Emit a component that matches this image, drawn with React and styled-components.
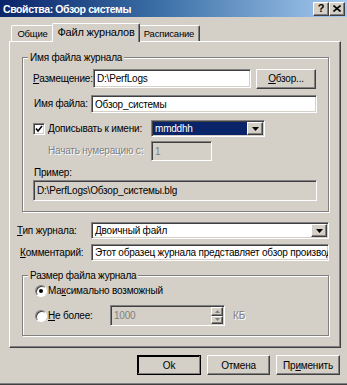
import React from 'react';
import styled, { createGlobalStyle, css } from 'styled-components';

const face = '#d4d0c8';
const shadow = '#808080';
const dark = '#404040';

const GlobalStyle = createGlobalStyle`
  html, body { margin: 0; padding: 0; background: ${face}; }
  * { box-sizing: border-box; }
  body {
    font-family: "Liberation Sans", Arial, sans-serif;
    font-size: 10px;
    letter-spacing: -0.2px;
    color: #000;
  }
`;

const sunken = css`
  border: 1px solid;
  border-color: ${shadow} #fff #fff ${shadow};
  box-shadow: inset 1px 1px 0 ${dark}, inset -1px -1px 0 ${face};
`;

const raised = css`
  border: 1px solid;
  border-color: #fff ${dark} ${dark} #fff;
  box-shadow: inset -1px -1px 0 ${shadow};
  background: ${face};
`;

const Window = styled.div`
  width: 347px;
  height: 385px;
  background: ${face};
  display: flex;
  flex-direction: column;
  overflow: hidden;
  border-bottom: 1px solid ${dark};
  box-shadow: inset 0 -1px 0 ${shadow};
`;

const TitleBar = styled.div`
  height: 17px;
  flex-shrink: 0;
  background: linear-gradient(to right, #0a246a 0%, #3a6ea5 45%, #a6caf0 100%);
  display: flex;
  align-items: center;
  justify-content: space-between;
  padding: 0 2px 0 3px;
`;

const Title = styled.span`
  color: #fff;
  font-weight: bold;
  font-size: 10.5px;
  letter-spacing: -0.4px;
`;

const CaptionButtons = styled.div`
  display: flex;
`;

const CaptionButton = styled.div`
  ${raised};
  width: 16px;
  height: 14px;
  display: flex;
  align-items: center;
  justify-content: center;
  font-weight: bold;
  font-size: 11px;
  line-height: 1;
`;

const Body = styled.div`
  flex: 1;
  display: flex;
  flex-direction: column;
  padding: 6px 6px 0 9px;
`;

const TabRow = styled.div`
  height: 18px;
  display: flex;
  align-items: flex-end;
  padding-left: 2px;
  position: relative;
  z-index: 1;
`;

const Tab = styled.div`
  width: ${p => p.$w}px;
  height: ${p => (p.$active ? 19 : 16)}px;
  margin: 0 ${p => (p.$active ? -2 : 0)}px ${p => (p.$active ? -1 : 0)}px;
  background: ${face};
  border-top: 1px solid #fff;
  border-left: 1px solid #fff;
  border-right: 1px solid ${dark};
  border-radius: 2px 2px 0 0;
  box-shadow: inset -1px 0 0 ${shadow};
  display: flex;
  align-items: center;
  justify-content: center;
  font-size: ${p => (p.$active ? 11 : 9.5)}px;
  padding-bottom: ${p => (p.$active ? 2 : 0)}px;
  position: relative;
  z-index: ${p => (p.$active ? 2 : 1)};
`;

const Panel = styled.div`
  width: 332px;
  height: 307px;
  flex-shrink: 0;
  border: 1px solid;
  border-color: #fff ${dark} ${dark} #fff;
  box-shadow: inset -1px -1px 0 ${shadow};
  padding: 0 11px 0 7px;
  display: flex;
  flex-direction: column;
`;

const Group = styled.fieldset`
  margin: ${p => p.$mt}px 0 0 5px;
  padding: ${p => p.$pt}px 11px ${p => p.$pb}px ${p => p.$pl}px;
  border: 1px solid ${shadow};
  box-shadow: 1px 1px 0 #fff, inset 1px 1px 0 #fff;
  min-width: 0;
  display: flex;
  flex-direction: column;
  flex-shrink: 0;
`;

const Legend = styled.legend`
  padding: 0 2px;
  margin-left: ${p => p.$ml}px;
  line-height: 13px;
  background: ${face};
`;

const Row = styled.div`
  display: flex;
  align-items: center;
  height: ${p => p.$h}px;
  margin-top: ${p => p.$mt || 0}px;
  flex-shrink: 0;
`;

const Label = styled.span`
  width: ${p => (p.$w ? `${p.$w}px` : 'auto')};
  flex-shrink: 0;
  white-space: nowrap;
  padding-left: ${p => p.$pl || 0}px;
  color: ${p => (p.$disabled ? shadow : '#000')};
  text-shadow: ${p => (p.$disabled ? '1px 1px 0 #fff' : 'none')};
  line-height: 12px;
  margin-top: ${p => p.$mt || 0}px;
`;

const U = styled.span`
  text-decoration: underline;
`;

const Field = styled.div`
  ${sunken};
  width: ${p => (p.$w ? `${p.$w}px` : 'auto')};
  flex: ${p => (p.$fill ? '1 1 0' : '0 0 auto')};
  min-width: 0;
  height: ${p => p.$h}px;
  background: ${p => (p.$readonly ? face : '#fff')};
  color: ${p => (p.$disabled ? shadow : '#000')};
  display: flex;
  align-items: center;
  padding: 0 2px 0 3px;
  white-space: nowrap;
  overflow: hidden;
  margin-top: ${p => p.$mt || 0}px;
  margin-left: ${p => p.$ml || 0}px;
`;

const ComboValue = styled.span`
  flex: 1;
  align-self: stretch;
  display: flex;
  align-items: center;
  margin: 1px 0 1px -2px;
  padding-left: 2px;
  background: ${p => (p.$selected ? '#0a246a' : 'transparent')};
  color: ${p => (p.$selected ? '#fff' : '#000')};
`;

const DropButton = styled.div`
  ${raised};
  width: 16px;
  align-self: stretch;
  margin: 1px -1px 1px 0;
  display: flex;
  align-items: center;
  justify-content: center;
`;

const PushButton = styled.div`
  ${raised};
  width: ${p => p.$w}px;
  height: ${p => p.$h || 20}px;
  margin-left: ${p => p.$ml || 0}px;
  display: flex;
  align-items: center;
  justify-content: center;
  flex-shrink: 0;
  ${p =>
    p.$default &&
    css`
      outline: 1px solid #000;
      outline-offset: -1px;
      box-shadow: inset -1px -1px 0 ${shadow}, inset 1px 1px 0 #000;
    `}
`;

const CheckBox = styled.div`
  ${sunken};
  width: 12px;
  height: 12px;
  background: #fff;
  display: flex;
  align-items: center;
  justify-content: center;
  flex-shrink: 0;
  margin-right: 3px;
`;

const Radio = styled.div`
  width: 12px;
  height: 12px;
  border-radius: 50%;
  border: 1px solid;
  border-color: ${shadow} #fff #fff ${shadow};
  box-shadow: inset 1px 1px 0 ${dark};
  background: #fff;
  display: flex;
  align-items: center;
  justify-content: center;
  flex-shrink: 0;
  margin-right: 1px;
`;

const Dot = styled.div`
  width: 4px;
  height: 4px;
  border-radius: 50%;
  background: #000;
`;

const SpinButtons = styled.div`
  display: flex;
  flex-direction: column;
  align-self: stretch;
  width: 12px;
  margin: 1px -1px 1px auto;
`;

const SpinPart = styled.div`
  ${raised};
  flex: 1;
  display: flex;
  align-items: center;
  justify-content: center;
`;

const Footer = styled.div`
  display: flex;
  justify-content: flex-end;
  margin-top: 7px;
  padding-right: 1px;
  gap: 6px;
`;

const Arrow = ({ up, size = 7, color = '#000' }) => (
  <svg width={size} height={Math.ceil(size / 2)} viewBox="0 0 7 4">
    <polygon points={up ? '3.5,0 7,4 0,4' : '0,0 7,0 3.5,4'} fill={color} />
  </svg>
);

const Combo = ({ w, h, children, selected }) => (
  <Field $w={w} $h={h} $fill={!w}>
    <ComboValue $selected={selected}>{children}</ComboValue>
    <DropButton>
      <Arrow />
    </DropButton>
  </Field>
);

export default function App() {
  return (
    <>
      <GlobalStyle />
      <Window>
        <TitleBar>
          <Title>Свойства: Обзор системы</Title>
          <CaptionButtons>
            <CaptionButton>?</CaptionButton>
            <CaptionButton>
              <svg width="8" height="7" viewBox="0 0 8 7">
                <path d="M0.5 0.5 L7.5 6.5 M7.5 0.5 L0.5 6.5" stroke="#000" strokeWidth="1.6" />
              </svg>
            </CaptionButton>
          </CaptionButtons>
        </TitleBar>
        <Body>
          <TabRow>
            <Tab $w={43}>Общие</Tab>
            <Tab $w={88} $active>Файл журналов</Tab>
            <Tab $w={62}>Расписание</Tab>
          </TabRow>
          <Panel>
            <Group $mt={9} $pt={5} $pb={10} $pl={10}>
              <Legend $ml={-5}>Имя файла журнала</Legend>
              <Row $h={19}>
                <Label $w={60}>
                  <U>Р</U>азмещение:
                </Label>
                <Field $w={158} $h={19}>D:\PerfLogs</Field>
                <PushButton $w={60} $h={20} $ml={5}>
                  <U>О</U>бзор...
                </PushButton>
              </Row>
              <Row $h={18} $mt={7}>
                <Label $w={58} $pl={1}>Имя файла:</Label>
                <Field $w={226} $h={18}>Обзор_системы</Field>
              </Row>
              <Row $h={17} $mt={7}>
                <CheckBox>
                  <svg width="8" height="8" viewBox="0 0 8 8">
                    <path d="M1 3.5 L3 6 L7 1" stroke="#000" strokeWidth="1.5" fill="none" />
                  </svg>
                </CheckBox>
                <Label $w={103}>Дописывать к имени:</Label>
                <Combo w={114} h={17} selected>
                  mmddhh
                </Combo>
              </Row>
              <Row $h={20} $mt={4}>
                <Label $w={118} $pl={15} $disabled>
                  Начать нумерацию с:
                </Label>
                <Field $w={61} $h={20} $readonly $disabled>
                  1
                </Field>
              </Row>
              <Label $pl={1} $mt={6}>Пример:</Label>
              <Field $h={21} $mt={1} $readonly>
                D:\PerfLogs\Обзор_системы.blg
              </Field>
            </Group>
            <Row $h={17} $mt={10}>
              <Label $w={74}>
                <U>Т</U>ип журнала:
              </Label>
              <Combo h={17}>Двоичный файл</Combo>
            </Row>
            <Row $h={17} $mt={5}>
              <Label $w={74} $pl={3}>
                <U>К</U>омментарий:
              </Label>
              <Field $h={17} $fill>
                Этот образец журнала представляет обзор производительности системы
              </Field>
            </Row>
            <Group $mt={8} $pt={2} $pb={9} $pl={12}>
              <Legend $ml={-7}>Размер файла журнала</Legend>
              <Row $h={14}>
                <Radio>
                  <Dot />
                </Radio>
                <Label>
                  Ма<U>к</U>симально возможный
                </Label>
              </Row>
              <Row $h={21} $mt={7}>
                <Radio />
                <Label $w={62}>
                  <U>Н</U>е более:
                </Label>
                <Field $w={115} $h={21} $readonly $disabled>
                  1000
                  <SpinButtons>
                    <SpinPart>
                      <Arrow up size={5} color={shadow} />
                    </SpinPart>
                    <SpinPart>
                      <Arrow size={5} color={shadow} />
                    </SpinPart>
                  </SpinButtons>
                </Field>
                <Label $pl={8} $disabled>
                  КБ
                </Label>
              </Row>
            </Group>
          </Panel>
          <Footer>
            <PushButton $w={64} $default>
              Ok
            </PushButton>
            <PushButton $w={63}>Отмена</PushButton>
            <PushButton $w={64}>
              Пр<U>и</U>менить
            </PushButton>
          </Footer>
        </Body>
      </Window>
    </>
  );
}
